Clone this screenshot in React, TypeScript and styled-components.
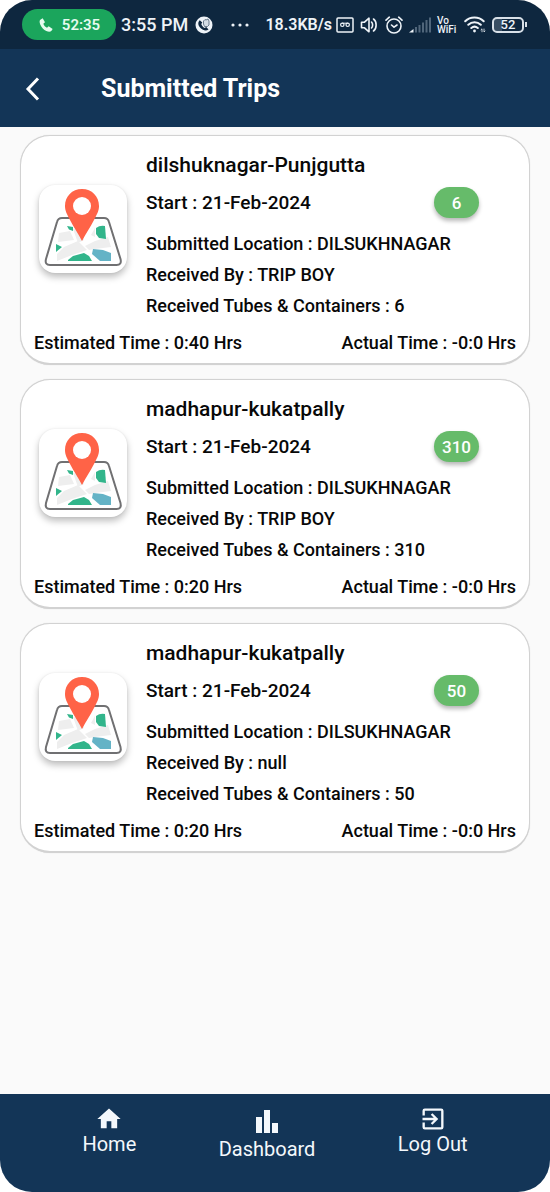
import React from 'react';
import styled, { createGlobalStyle } from 'styled-components';

const GlobalStyle = createGlobalStyle`
  * { box-sizing: border-box; }
  body {
    margin: 0;
    background: #ffffff;
    font-family: Roboto, "Liberation Sans", sans-serif;
  }
`;

const Screen = styled.div`
  display: flex;
  flex-direction: column;
  min-height: 100vh;
  background: #fafafa;
  border-radius: 32px;
  overflow: hidden;
`;

const StatusBar = styled.div`
  display: flex;
  align-items: center;
  justify-content: space-between;
  height: 49px;
  padding: 0 23px 0 22px;
  background: #0e273f;
  color: #eef3f8;
  font-size: 18px;
  font-weight: 500;
  white-space: nowrap;
`;

const StatusGroup = styled.div<{ $gap: number }>`
  display: flex;
  align-items: center;
  gap: ${(p) => p.$gap}px;
`;

const CallPill = styled.div`
  display: flex;
  align-items: center;
  justify-content: center;
  gap: 8px;
  width: 94px;
  height: 31px;
  border-radius: 16px;
  background: #1ba55c;
  color: #e6fbef;
  font-size: 15px;
  font-weight: 600;
`;

const Clock = styled.span`
  margin-right: 2px;
`;

const NetSpeed = styled.span`
  font-size: 16px;
  font-weight: 600;
`;

const VoWifi = styled.span`
  display: flex;
  flex-direction: column;
  width: 21px;
  font-size: 10px;
  line-height: 9px;
  font-weight: 500;
`;

const Header = styled.header`
  display: flex;
  align-items: center;
  height: 78px;
  padding: 2px 18px 0;
  background: #133557;
  color: #ffffff;
`;

const BackButton = styled.button`
  display: flex;
  align-items: center;
  justify-content: center;
  width: 28px;
  height: 40px;
  margin-right: 55px;
  padding: 0;
  border: 0;
  background: none;
  color: inherit;
`;

const Title = styled.h1`
  margin: 0;
  font-size: 25px;
  line-height: 32px;
  font-weight: 700;
`;

const TripList = styled.main`
  display: flex;
  flex: 1;
  flex-direction: column;
  gap: 14px;
  padding: 8px 20px;
`;

const Card = styled.article`
  padding: 17px 13px 8px;
  border: 1px solid #d2d2d2;
  border-bottom-width: 2px;
  border-radius: 30px;
  background: #ffffff;
  box-shadow: 0 0 1px rgba(0, 0, 0, 0.16);
  color: #080808;
`;

const CardBody = styled.div`
  display: flex;
  gap: 19px;
  padding-left: 5px;
`;

const MapTile = styled.div`
  flex: none;
  width: 88px;
  height: 88px;
  margin-top: 32px;
  border-radius: 16px;
  background: #ffffff;
  box-shadow: 0 4px 7px rgba(0, 0, 0, 0.26), 0 0 2px rgba(0, 0, 0, 0.08);
`;

const Info = styled.div`
  flex: 1;
  min-width: 0;
`;

const Route = styled.h2`
  margin: 0 0 10px;
  font-size: 21px;
  line-height: 24px;
  font-weight: 500;
`;

const StartRow = styled.div`
  display: flex;
  align-items: center;
  justify-content: space-between;
  height: 31px;
  margin-bottom: 10px;
  padding-right: 37px;
  font-size: 19px;
  font-weight: 500;
`;

const Badge = styled.span`
  display: flex;
  align-items: center;
  justify-content: center;
  width: 45px;
  height: 31px;
  border-radius: 16px;
  background: #66bb6a;
  box-shadow: 0 3px 4px rgba(0, 0, 0, 0.28);
  color: #ffffff;
  font-size: 17px;
`;

const Detail = styled.p`
  margin: 0;
  font-size: 18px;
  line-height: 31px;
  font-weight: 500;
`;

const Times = styled.div`
  display: flex;
  justify-content: space-between;
  margin-top: 10px;
  font-size: 18px;
  line-height: 24px;
  font-weight: 500;
`;

const BottomNav = styled.nav`
  display: flex;
  align-items: flex-start;
  justify-content: space-evenly;
  height: 98px;
  padding-top: 11px;
  background: #133557;
`;

const NavLink = styled.a`
  display: flex;
  flex-direction: column;
  align-items: center;
  color: #f4f8fc;
  font-size: 20px;
  line-height: 22px;
  text-decoration: none;
`;

const PhoneIcon = () => (
  <svg width="16" height="16" viewBox="0 0 24 24" fill="currentColor" aria-hidden="true">
    <path d="M7 2 3.500 4C2 5 2 8 3.500 11.500c2 4 5 7.500 9 9.500 3 1.500 6 1.500 7.500 0l2-3-6-4-2.500 2c-2.500-1-4.500-3.500-5.500-6l2.500-2z" />
  </svg>
);

const CallBubbleIcon = () => (
  <svg width="18" height="18" viewBox="0 0 18 18" aria-hidden="true">
    <circle cx="9" cy="9" r="8.500" fill="#eef3f8" />
    <path d="M4.800 4.200C2.500 6 3 9.500 5.500 12s5.500 3.300 8 1.500l-2.200-2.500-1.800.9C8 11 6.800 9.600 6.300 8l1-1.600z" fill="#0e273f" />
    <path d="M8.500 5 10 3.500l1 .5 2-1 1 2v4l-1.500 1.500h-3L8.500 8z" fill="#d4dde5" stroke="#4d6175" strokeWidth=".8" />
  </svg>
);

const DotsIcon = () => (
  <svg width="18" height="4" viewBox="0 0 18 4" fill="currentColor" aria-hidden="true">
    <circle cx="2" cy="2" r="1.600" />
    <circle cx="9" cy="2" r="1.600" />
    <circle cx="16" cy="2" r="1.600" />
  </svg>
);

const VoicemailIcon = () => (
  <svg width="18" height="16" viewBox="0 0 18 16" fill="none" stroke="currentColor" aria-hidden="true">
    <rect x="1" y="1" width="16" height="14" rx="1" strokeWidth="1.500" />
    <circle cx="6.300" cy="7.800" r="1.700" strokeWidth="1.200" />
    <circle cx="11.700" cy="7.800" r="1.700" strokeWidth="1.200" />
    <path d="M6 6.200h6" strokeWidth="1" />
  </svg>
);

const SpeakerIcon = () => (
  <svg width="19" height="18" viewBox="0 0 19 18" fill="none" stroke="currentColor" strokeWidth="1.600" strokeLinejoin="round" strokeLinecap="round" aria-hidden="true">
    <path d="M1.500 6.200h3L9 2.200v13.600l-4.500-4h-3z" />
    <path d="M11.500 6c1.500 1.500 1.500 4.500 0 6M13.500 3c3.500 2.500 3.500 9.500 0 12" />
  </svg>
);

const AlarmIcon = () => (
  <svg width="18" height="18" viewBox="0 0 18 18" fill="none" stroke="currentColor" strokeWidth="1.600" strokeLinecap="round" strokeLinejoin="round" aria-hidden="true">
    <circle cx="9" cy="10" r="7" />
    <path d="M6.500 9 9 11.200 12 9M1 4.200 4.300 1.200M17 4.200l-3.300-3" />
  </svg>
);

const SignalIcon = () => (
  <svg width="22" height="16" viewBox="0 0 22 16" aria-hidden="true">
    <path d="M0 15.500 4.500 12v3.500z" fill="#eef3f8" />
    <g fill="#50667b">
      <rect x="6" y="10" width="2" height="5.500" />
      <rect x="9.500" y="8" width="2" height="7.500" />
      <rect x="13" y="5.500" width="2" height="10" />
      <rect x="16.500" y="3" width="2" height="12.500" />
      <rect x="20" y=".5" width="2" height="15" />
    </g>
  </svg>
);

const WifiIcon = () => (
  <svg width="22" height="17" viewBox="0 0 22 17" fill="none" stroke="currentColor" strokeWidth="2" strokeLinecap="round" aria-hidden="true">
    <path d="M1.200 5.200c5-5 13.500-5 18.500 0M4.300 8.700c3.500-3.300 9-3.300 12.500 0M7.300 12c2-1.700 4.500-1.700 6.500 0" />
    <circle cx="10.500" cy="15" r="1.400" fill="currentColor" stroke="none" />
    <path d="M18 15.800v-3l-1 1M20 13v3l1-1" strokeWidth=".8" />
  </svg>
);

const BatteryFrame = styled.span`
  display: flex;
  align-items: center;

  &::after {
    content: "";
    width: 2px;
    height: 5px;
    margin-left: 1px;
    background: #d8e0e8;
  }
`;

const BatteryBody = styled.span`
  display: flex;
  align-items: center;
  justify-content: center;
  width: 32px;
  height: 16px;
  border: 2px solid #d8e0e8;
  border-radius: 5px;
  background: linear-gradient(90deg, #384e63 30%, transparent 30%);
  font-size: 13px;
  line-height: 12px;
`;

const BackIcon = () => (
  <svg width="16" height="24" viewBox="0 0 16 24" fill="none" stroke="currentColor" strokeWidth="3" aria-hidden="true">
    <path d="M14 1.500 4 12l10 10.500" />
  </svg>
);

const MapPinIcon = () => (
  <svg width="88" height="88" viewBox="0 0 88 88" role="img" aria-label="Map">
    <path d="M23 33h42q4 0 5 4l11.500 37q1.500 6-4 6H11q-5.500 0-4-6L18 37q1-4 5-4z" fill="#ffffff" stroke="#707072" strokeWidth="2" />
    <g fill="#eeeeee">
      <path d="m20 48 11-2 4 9-16 2z" />
      <path d="m25 62 14-6 9 9-15 5-15 6v-7z" />
      <path d="m34 44 6 1 5 10-6 3z" />
      <path d="m46 61 10-5 13-4 3 10-16 2-6 1z" />
      <path d="m52 50 4-7v9z" />
    </g>
    <g fill="#32b58b">
      <path d="m28 41 6 1v4l-4-1.500z" />
      <path d="M57 43q4-3 9-2l1 13-7-1-3-4z" />
      <path d="m17 59 6 3-6 5z" />
      <path d="m29 75 5-4 11-3 5 3 3 5H29z" />
    </g>
    <path d="m54 64 10 1 8 3v8H61l-8-7z" fill="#64b3c6" />
    <path d="M43 4c-10 0-17 7.500-17 17 0 5 2 8 5 14 4 8 8 13 12 21 4-8 8-13 12-21 3-6 5-9 5-14 0-9.500-7-17-17-17z" fill="#ff6347" />
    <circle cx="43" cy="21" r="9" fill="#ffffff" />
  </svg>
);

const HomeIcon = () => (
  <svg width="28" height="28" viewBox="0 0 24 24" fill="currentColor" aria-hidden="true">
    <path d="M10 20v-6h4v6h5v-8h3L12 3 2 12h3v8z" />
  </svg>
);

const ChartIcon = () => (
  <svg width="32" height="33" viewBox="0 0 32 33" fill="currentColor" aria-hidden="true">
    <path d="M5 12h6v16H5zM13 5h6v23h-6zM21 18h6v10h-6z" />
  </svg>
);

const LogOutIcon = () => (
  <svg width="28" height="28" viewBox="0 0 24 24" fill="currentColor" aria-hidden="true">
    <path d="M10.090 15.590 11.500 17l5-5-5-5-1.410 1.410L12.670 11H3v2h9.670zM19 3H5a2 2 0 0 0-2 2v4h2V5h14v14H5v-4H3v4a2 2 0 0 0 2 2h14a2 2 0 0 0 2-2V5a2 2 0 0 0-2-2z" />
  </svg>
);

interface Trip {
  route: string;
  start: string;
  count: number;
  location: string;
  receivedBy: string;
  estimated: string;
  actual: string;
}

const trips: Trip[] = [
  { route: 'dilshuknagar-Punjgutta', start: '21-Feb-2024', count: 6, location: 'DILSUKHNAGAR', receivedBy: 'TRIP BOY', estimated: '0:40 Hrs', actual: '-0:0 Hrs' },
  { route: 'madhapur-kukatpally', start: '21-Feb-2024', count: 310, location: 'DILSUKHNAGAR', receivedBy: 'TRIP BOY', estimated: '0:20 Hrs', actual: '-0:0 Hrs' },
  { route: 'madhapur-kukatpally', start: '21-Feb-2024', count: 50, location: 'DILSUKHNAGAR', receivedBy: 'null', estimated: '0:20 Hrs', actual: '-0:0 Hrs' },
];

const TripCard = ({ trip }: { trip: Trip }) => (
  <Card>
    <CardBody>
      <MapTile>
        <MapPinIcon />
      </MapTile>
      <Info>
        <Route>{trip.route}</Route>
        <StartRow>
          <span>{`Start : ${trip.start}`}</span>
          <Badge>{trip.count}</Badge>
        </StartRow>
        <Detail>{`Submitted Location : ${trip.location}`}</Detail>
        <Detail>{`Received By : ${trip.receivedBy}`}</Detail>
        <Detail>{`Received Tubes & Containers : ${trip.count}`}</Detail>
      </Info>
    </CardBody>
    <Times>
      <span>{`Estimated Time : ${trip.estimated}`}</span>
      <span>{`Actual Time : ${trip.actual}`}</span>
    </Times>
  </Card>
);

export default function App() {
  return (
    <>
      <GlobalStyle />
      <Screen>
        <StatusBar>
          <StatusGroup $gap={5}>
            <CallPill>
              <PhoneIcon />
              52:35
            </CallPill>
            <Clock>3:55 PM</Clock>
            <StatusGroup $gap={18}>
              <CallBubbleIcon />
              <DotsIcon />
            </StatusGroup>
          </StatusGroup>
          <StatusGroup $gap={6}>
            <StatusGroup $gap={4}>
              <NetSpeed>18.3KB/s</NetSpeed>
              <VoicemailIcon />
            </StatusGroup>
            <SpeakerIcon />
            <AlarmIcon />
            <SignalIcon />
            <VoWifi>
              <span>Vo</span>
              <span>WiFi</span>
            </VoWifi>
            <WifiIcon />
            <BatteryFrame>
              <BatteryBody>52</BatteryBody>
            </BatteryFrame>
          </StatusGroup>
        </StatusBar>
        <Header>
          <BackButton type="button" aria-label="Back">
            <BackIcon />
          </BackButton>
          <Title>Submitted Trips</Title>
        </Header>
        <TripList>
          {trips.map((trip, i) => (
            <TripCard key={i} trip={trip} />
          ))}
        </TripList>
        <BottomNav>
          <NavLink href="#home">
            <HomeIcon />
            Home
          </NavLink>
          <NavLink href="#dashboard">
            <ChartIcon />
            Dashboard
          </NavLink>
          <NavLink href="#logout">
            <LogOutIcon />
            Log Out
          </NavLink>
        </BottomNav>
      </Screen>
    </>
  );
}
